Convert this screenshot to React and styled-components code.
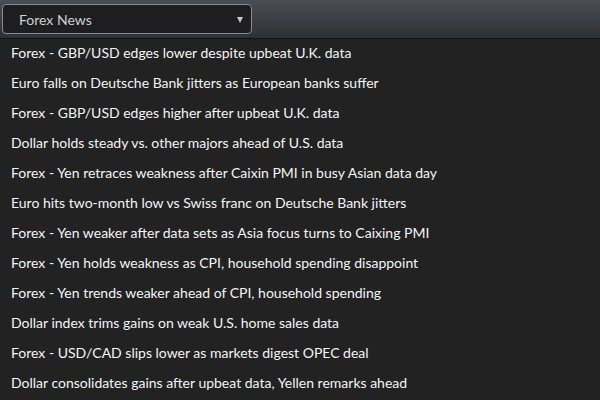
import React from "react";
import styled, { createGlobalStyle } from "styled-components";

const GlobalStyle = createGlobalStyle`
  html, body {
    margin: 0;
    padding: 0;
    background: #222222;
  }
  body {
    font-family: Lato, "Liberation Sans", sans-serif;
  }
`;

const Page = styled.div`
  width: 600px;
  height: 400px;
  overflow: hidden;
  background: #222222;
`;

const Toolbar = styled.div`
  height: 39px;
  box-sizing: border-box;
  padding: 4px 0 0 2px;
  background: linear-gradient(to bottom, #4a4d55 0%, #2e3035 100%);
  border-bottom: 1px solid #111113;
`;

const Select = styled.div`
  width: 250px;
  height: 30px;
  box-sizing: border-box;
  display: flex;
  align-items: center;
  justify-content: space-between;
  padding: 0 8px 0 16px;
  background: #1e1e21;
  border: 1px solid #8a8c90;
  border-radius: 4px;
  color: #cfd0d2;
  font-size: 14px;
`;

const Caret = styled.span`
  width: 0;
  height: 0;
  border-left: 3.5px solid transparent;
  border-right: 3.5px solid transparent;
  border-top: 6px solid #c8c9cb;
  margin-top: 1px;
`;

const List = styled.ul`
  list-style: none;
  margin: 0;
  padding: 0;
`;

const Item = styled.li`
  height: 30px;
  line-height: 28px;
  padding-left: 11px;
  color: #f2f4f6;
  font-size: 14px;
  white-space: nowrap;
`;

const news = [
  "Forex - GBP/USD edges lower despite upbeat U.K. data",
  "Euro falls on Deutsche Bank jitters as European banks suffer",
  "Forex - GBP/USD edges higher after upbeat U.K. data",
  "Dollar holds steady vs. other majors ahead of U.S. data",
  "Forex - Yen retraces weakness after Caixin PMI in busy Asian data day",
  "Euro hits two-month low vs Swiss franc on Deutsche Bank jitters",
  "Forex - Yen weaker after data sets as Asia focus turns to Caixing PMI",
  "Forex - Yen holds weakness as CPI, household spending disappoint",
  "Forex - Yen trends weaker ahead of CPI, household spending",
  "Dollar index trims gains on weak U.S. home sales data",
  "Forex - USD/CAD slips lower as markets digest OPEC deal",
  "Dollar consolidates gains after upbeat data, Yellen remarks ahead",
];

export default function App() {
  return (
    <Page>
      <GlobalStyle />
      <Toolbar>
        <Select>
          Forex News
          <Caret />
        </Select>
      </Toolbar>
      <List>
        {news.map((n) => (
          <Item key={n}>{n}</Item>
        ))}
      </List>
    </Page>
  );
}
